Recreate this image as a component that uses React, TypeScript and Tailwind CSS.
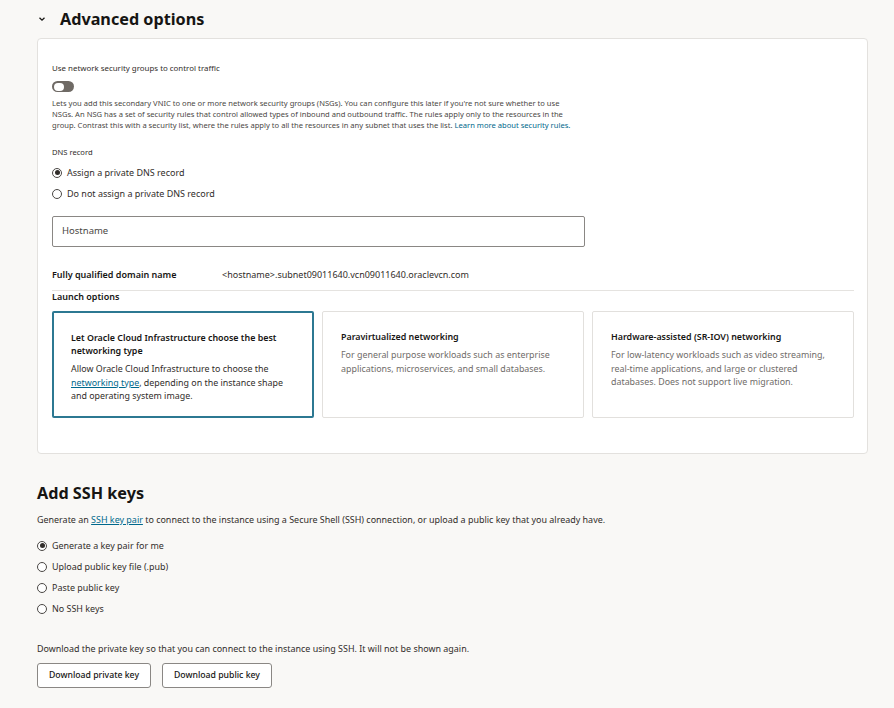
import React from "react";

const font = { fontFamily: '"Noto Sans", "Open Sans", sans-serif' };

function Radio({ checked, label, size = "text-[9px]" }: { checked?: boolean; label: string; size?: string }) {
  return (
    <div className="flex items-center gap-[5px]">
      <span className="w-[10px] h-[10px] rounded-full border border-[#4a4744] flex items-center justify-center bg-white">
        {checked && <span className="w-[5px] h-[5px] rounded-full bg-[#312d2a]" />}
      </span>
      <span className={`${size} text-[#312d2a] leading-[13px]`}>{label}</span>
    </div>
  );
}

function Card({ title, children, selected }: { title: string; children: React.ReactNode; selected?: boolean }) {
  return (
    <div
      className={`flex-1 h-[107px] bg-white rounded-[2px] pt-[18px] ${
        selected ? "border-2 border-[#2c7892] px-[17px]" : "border border-[#e2e0dd] px-[18px]"
      }`}
    >
      <div className="text-[8.9px] font-semibold text-[#161513] leading-[13px]">{title}</div>
      <div className={`mt-[5px] text-[8.9px] leading-[13.5px] ${selected ? "text-[#312d2a]" : "text-[#6f6c69]"}`}>{children}</div>
    </div>
  );
}

export default function App() {
  return (
    <div className="min-h-[708px] w-[894px] bg-[#f9f8f6] text-[#161513]" style={font}>
      <div className="flex items-center h-[38px] pl-[37px]">
        <svg width="10" height="10" viewBox="0 0 10 10" className="mr-[13px]">
          <path d="M2.5 3.8 L5 6.2 L7.5 3.8" stroke="#161513" strokeWidth="1.3" fill="none" />
        </svg>
        <h2 className="text-[16.2px] font-bold leading-none">Advanced options</h2>
      </div>

      <div className="ml-[37px] w-[831px] h-[416px] bg-white border border-[#e3e1de] rounded-[4px] px-[14px]">
        <div className="mt-[23px] text-[7.9px] text-[#312d2a] leading-[12px]">Use network security groups to control traffic</div>
        <div className="mt-[7px] w-[22px] h-[11px] rounded-full bg-[#6f6a65] p-[1.5px] flex">
          <span className="w-[10px] h-[8px] rounded-full bg-white" />
        </div>
        <p className="mt-[6px] text-[7.6px] leading-[11px] text-[#4a4744] w-[530px]">
          Lets you add this secondary VNIC to one or more network security groups (NSGs). You can configure this later if you're not sure whether to use NSGs. An NSG has a set of security rules that control allowed types of inbound and outbound traffic. The rules apply only to the resources in the group. Contrast this with a security list, where the rules apply to all the resources in any subnet that uses the list.{" "}
          <span className="text-[#00688c]">Learn more about security rules.</span>
        </p>

        <div className="mt-[16px] text-[7.6px] text-[#312d2a] leading-[11px]">DNS record</div>
        <div className="mt-[8px] flex flex-col gap-[8px]">
          <Radio checked label="Assign a private DNS record" size="text-[9px]" />
          <Radio label="Do not assign a private DNS record" size="text-[9px]" />
        </div>

        <div className="mt-[16px] w-[533px] h-[31px] border border-[#8a8784] rounded-[2px] flex items-center px-[9px]">
          <span className="text-[9.5px] text-[#4a4744]">Hostname</span>
        </div>

        <div className="mt-[21px] flex items-center text-[9px] leading-[13px]">
          <span className="w-[170px] font-semibold text-[#161513]">Fully qualified domain name</span>
          <span className="text-[#312d2a]">&lt;hostname&gt;.subnet09011640.vcn09011640.oraclevcn.com</span>
        </div>

        <div className="mt-[9px] border-t border-[#e5e3e0] w-[802px]" />
        <div className="mt-0 text-[9px] font-semibold text-[#161513] leading-[11px]">Launch options</div>

        <div className="mt-[9px] flex gap-[8px] w-[802px]">
          <Card selected title="Let Oracle Cloud Infrastructure choose the best networking type">
            Allow Oracle Cloud Infrastructure to choose the <span className="text-[#00688c] underline">networking type</span>, depending on the instance shape and operating system image.
          </Card>
          <Card title="Paravirtualized networking">
            For general purpose workloads such as enterprise applications, microservices, and small databases.
          </Card>
          <Card title="Hardware-assisted (SR-IOV) networking">
            For low-latency workloads such as video streaming, real-time applications, and large or clustered databases. Does not support live migration.
          </Card>
        </div>
      </div>

      <div className="pl-[37px]">
        <h2 className="mt-[29px] text-[16.2px] font-bold leading-[20px]">Add SSH keys</h2>
        <p className="mt-[10px] text-[8.95px] text-[#312d2a] leading-[13px]">
          Generate an <span className="text-[#00688c] underline">SSH key pair</span> to connect to the instance using a Secure Shell (SSH) connection, or upload a public key that you already have.
        </p>
        <div className="mt-[13px] flex flex-col gap-[8px]">
          <Radio checked label="Generate a key pair for me" size="text-[8.95px]" />
          <Radio label="Upload public key file (.pub)" size="text-[8.95px]" />
          <Radio label="Paste public key" size="text-[8.95px]" />
          <Radio label="No SSH keys" size="text-[8.95px]" />
        </div>
        <p className="mt-[27px] text-[8.95px] text-[#312d2a] leading-[13px]">
          Download the private key so that you can connect to the instance using SSH. It will not be shown again.
        </p>
        <div className="mt-[8px] flex gap-[11px]">
          <button className="h-[25px] px-[11px] border border-[#8a8784] rounded-[3px] bg-white text-[8.7px] font-medium text-[#161513]">Download private key</button>
          <button className="h-[25px] px-[11px] border border-[#8a8784] rounded-[3px] bg-white text-[8.7px] font-medium text-[#161513]">Download public key</button>
        </div>
      </div>
    </div>
  );
}
